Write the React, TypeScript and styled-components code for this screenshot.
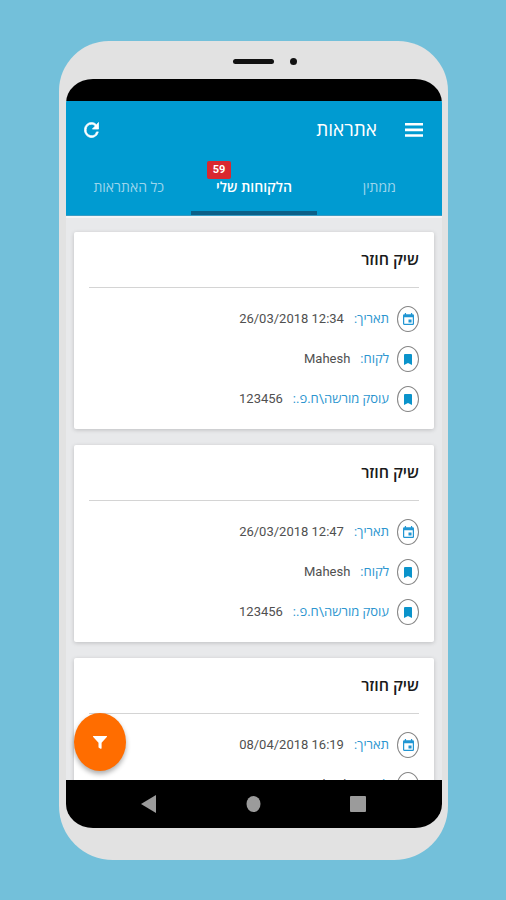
import React from "react";
import styled, { createGlobalStyle } from "styled-components";

const GlobalStyle = createGlobalStyle`
  *, *::before, *::after { box-sizing: border-box; }
  body { margin: 0; font-family: Roboto, "Open Sans", "Liberation Sans", sans-serif; }
  button { border: 0; padding: 0; background: none; color: inherit; font: inherit; cursor: pointer; }
  h1, h2, dl, dt, dd { margin: 0; font-weight: 400; }
`;

const Page = styled.div`
  display: flex;
  height: 100vh;
  padding: 41px 58px 40px 59px;
  background: #73c0da;
`;

const Phone = styled.div`
  display: flex;
  flex-direction: column;
  flex: 1;
  min-width: 0;
  padding: 0 6px 32px 7px;
  border-radius: 50px 50px 54px 54px;
  background: #e2e2e2;
`;

const Bezel = styled.div`
  display: flex;
  align-items: center;
  justify-content: center;
  gap: 16px;
  height: 38px;
  padding: 2px 0 0 22px;
`;

const Speaker = styled.span`
  width: 41px;
  height: 5px;
  border-radius: 3px;
  background: #111;
`;

const Camera = styled.span`
  width: 7px;
  height: 7px;
  border-radius: 50%;
  background: #111;
`;

const Screen = styled.div`
  position: relative;
  display: flex;
  flex-direction: column;
  flex: 1;
  min-height: 0;
  overflow: hidden;
  border-radius: 27px / 24px;
  background: #e8e9eb;
`;

const StatusBar = styled.div`
  flex: none;
  height: 22px;
  background: #000;
`;

const Header = styled.header`
  flex: none;
  background: #009bd1;
  color: #fff;
`;

const Toolbar = styled.div`
  display: flex;
  align-items: center;
  height: 58px;
  padding: 0 19px 0 18px;
`;

const IconButton = styled.button`
  display: flex;
  svg { display: block; }
`;

const Title = styled.h1`
  flex: 1;
  margin-right: 28px;
  font-size: 19px;
  line-height: 24px;
`;

const Tabs = styled.nav`
  display: flex;
  height: 57px;
  border-bottom: 1px solid #3a9cc4;
`;

const Tab = styled.button<{ $active?: boolean }>`
  flex: 1;
  padding-top: 4px;
  border-bottom: 4px solid ${(p) => (p.$active ? "#0b6088" : "transparent")};
  color: ${(p) => (p.$active ? "#fff" : "#9bd5ec")};
  font-size: 14px;
  font-weight: ${(p) => (p.$active ? 600 : 400)};
  line-height: 20px;
`;

const TabLabel = styled.span`
  position: relative;
  display: inline-block;
`;

const Badge = styled.span`
  position: absolute;
  left: -9px;
  bottom: 18px;
  width: 24px;
  border-radius: 2px;
  background: #d9282f;
  color: #fff;
  font-size: 11px;
  font-weight: 700;
  line-height: 18px;
`;

const List = styled.main`
  display: flex;
  flex-direction: column;
  gap: 16px;
  flex: 1;
  min-height: 0;
  overflow: hidden;
  padding: 14px 8px 0;
  border-top: 2px solid #f3f4f5;
`;

const Card = styled.article`
  flex: none;
  padding: 0 15px 10px;
  border-radius: 2px;
  background: #fff;
  box-shadow: 0 1px 4px rgba(0, 0, 0, 0.18);
`;

const CardTitle = styled.h2`
  height: 56px;
  border-bottom: 1px solid #d4d4d4;
  color: #1a1a1a;
  font-size: 16px;
  font-weight: 600;
  line-height: 56px;
`;

const Fields = styled.dl`
  padding-top: 11px;
`;

const Field = styled.div`
  display: flex;
  align-items: center;
  height: 40px;
  font-size: 13px;
  line-height: 20px;
`;

const FieldIcon = styled.span`
  display: flex;
  align-items: center;
  justify-content: center;
  width: 22px;
  height: 26px;
  margin-left: 8px;
  border: 1px solid #858585;
  border-radius: 50%;
`;

const FieldName = styled.dt`
  margin-left: 10px;
  color: #2b95cf;
`;

const FieldValue = styled.dd`
  color: #505050;
`;

const FilterButton = styled.button`
  position: absolute;
  left: 8px;
  bottom: 57px;
  display: flex;
  align-items: center;
  justify-content: center;
  width: 52px;
  height: 58px;
  border-radius: 50%;
  background: #ff6d00;
  box-shadow: 0 3px 5px rgba(0, 0, 0, 0.32);
`;

const NavBar = styled.nav`
  display: flex;
  align-items: center;
  justify-content: space-between;
  flex: none;
  height: 48px;
  padding: 0 76px 0 75px;
  background: #000;
`;

const MenuIcon = () => (
  <svg width="18" height="14" viewBox="0 0 18 14" fill="#fff" aria-hidden="true">
    <path d="M0 0h18v2.600H0zM0 5.600h18v2.600H0zM0 11.200h18v2.600H0z" />
  </svg>
);

const RefreshIcon = () => (
  <svg width="15" height="16" viewBox="3.500 3.500 17 17" preserveAspectRatio="none" aria-hidden="true">
    <path
      fill="#fff"
      stroke="#fff"
      strokeWidth=".8"
      d="M17.65 6.35A7.96 7.96 0 0 0 12 4a8 8 0 1 0 7.73 10h-2.08A6 6 0 1 1 12 6c1.66 0 3.14.69 4.22 1.78L13 11h7V4l-2.35 2.35z"
    />
  </svg>
);

const CalendarIcon = () => (
  <svg width="11" height="12" viewBox="3 1 18 20" preserveAspectRatio="none" aria-hidden="true">
    <path
      fill="#2196d3"
      d="M17 12h-5v5h5v-5zM16 1v2H8V1H6v2H5a2 2 0 0 0-2 2v14c0 1.100.9 2 2 2h14a2 2 0 0 0 2-2V5a2 2 0 0 0-2-2h-1V1h-2zm3 18H5V8h14v11z"
    />
  </svg>
);

const BookmarkIcon = () => (
  <svg width="8" height="11" viewBox="0 0 8 11" aria-hidden="true">
    <path fill="#0a93cb" d="M1 0h6a1 1 0 0 1 1 1v10L4 9 0 11V1a1 1 0 0 1 1-1z" />
  </svg>
);

const FunnelIcon = () => (
  <svg width="14" height="13" viewBox="0 0 14 13" aria-hidden="true">
    <path fill="#fff" d="M.6 0h12.800a.5.5 0 0 1 .4.900L8.600 6.800v5.200a.8.8 0 0 1-1.200.700L5.900 11.800a.8.8 0 0 1-.4-.700V6.800L.2.900A.5.5 0 0 1 .6 0z" />
  </svg>
);

const notices = [
  { date: "26/03/2018 12:34", customer: "Mahesh", company: "123456" },
  { date: "26/03/2018 12:47", customer: "Mahesh", company: "123456" },
  { date: "08/04/2018 16:19", customer: "Mahesh", company: "123456" },
];

interface NoticeFieldProps {
  icon: React.ReactNode;
  name: string;
  value: string;
}

const NoticeField = ({ icon, name, value }: NoticeFieldProps) => (
  <Field>
    <FieldIcon>{icon}</FieldIcon>
    <FieldName>{name}</FieldName>
    <FieldValue dir="ltr">{value}</FieldValue>
  </Field>
);

export default function App() {
  return (
    <>
      <GlobalStyle />
      <Page>
        <Phone>
          <Bezel>
            <Speaker />
            <Camera />
          </Bezel>
          <Screen>
            <StatusBar />
            <Header dir="rtl">
              <Toolbar>
                <IconButton aria-label="תפריט">
                  <MenuIcon />
                </IconButton>
                <Title>אתראות</Title>
                <IconButton aria-label="רענון">
                  <RefreshIcon />
                </IconButton>
              </Toolbar>
              <Tabs>
                <Tab>ממתין</Tab>
                <Tab $active>
                  <TabLabel>
                    הלקוחות שלי
                    <Badge>59</Badge>
                  </TabLabel>
                </Tab>
                <Tab>כל האתראות</Tab>
              </Tabs>
            </Header>
            <List dir="rtl">
              {notices.map((n) => (
                <Card key={n.date}>
                  <CardTitle>שיק חוזר</CardTitle>
                  <Fields>
                    <NoticeField icon={<CalendarIcon />} name="תאריך:" value={n.date} />
                    <NoticeField icon={<BookmarkIcon />} name="לקוח:" value={n.customer} />
                    <NoticeField icon={<BookmarkIcon />} name="עוסק מורשה\ח.פ.:" value={n.company} />
                  </Fields>
                </Card>
              ))}
            </List>
            <FilterButton aria-label="סינון">
              <FunnelIcon />
            </FilterButton>
            <NavBar>
              <IconButton aria-label="חזרה">
                <svg width="15" height="18" viewBox="0 0 15 18" aria-hidden="true">
                  <path fill="#9b9b9b" d="M15 0v18L0 9z" />
                </svg>
              </IconButton>
              <IconButton aria-label="בית">
                <svg width="15" height="16" viewBox="0 0 15 16" aria-hidden="true">
                  <ellipse fill="#9b9b9b" cx="7.5" cy="8" rx="7" ry="8" />
                </svg>
              </IconButton>
              <IconButton aria-label="יישומים אחרונים">
                <svg width="16" height="16" viewBox="0 0 16 16" aria-hidden="true">
                  <rect fill="#9b9b9b" width="16" height="16" rx="1" />
                </svg>
              </IconButton>
            </NavBar>
          </Screen>
        </Phone>
      </Page>
    </>
  );
}
